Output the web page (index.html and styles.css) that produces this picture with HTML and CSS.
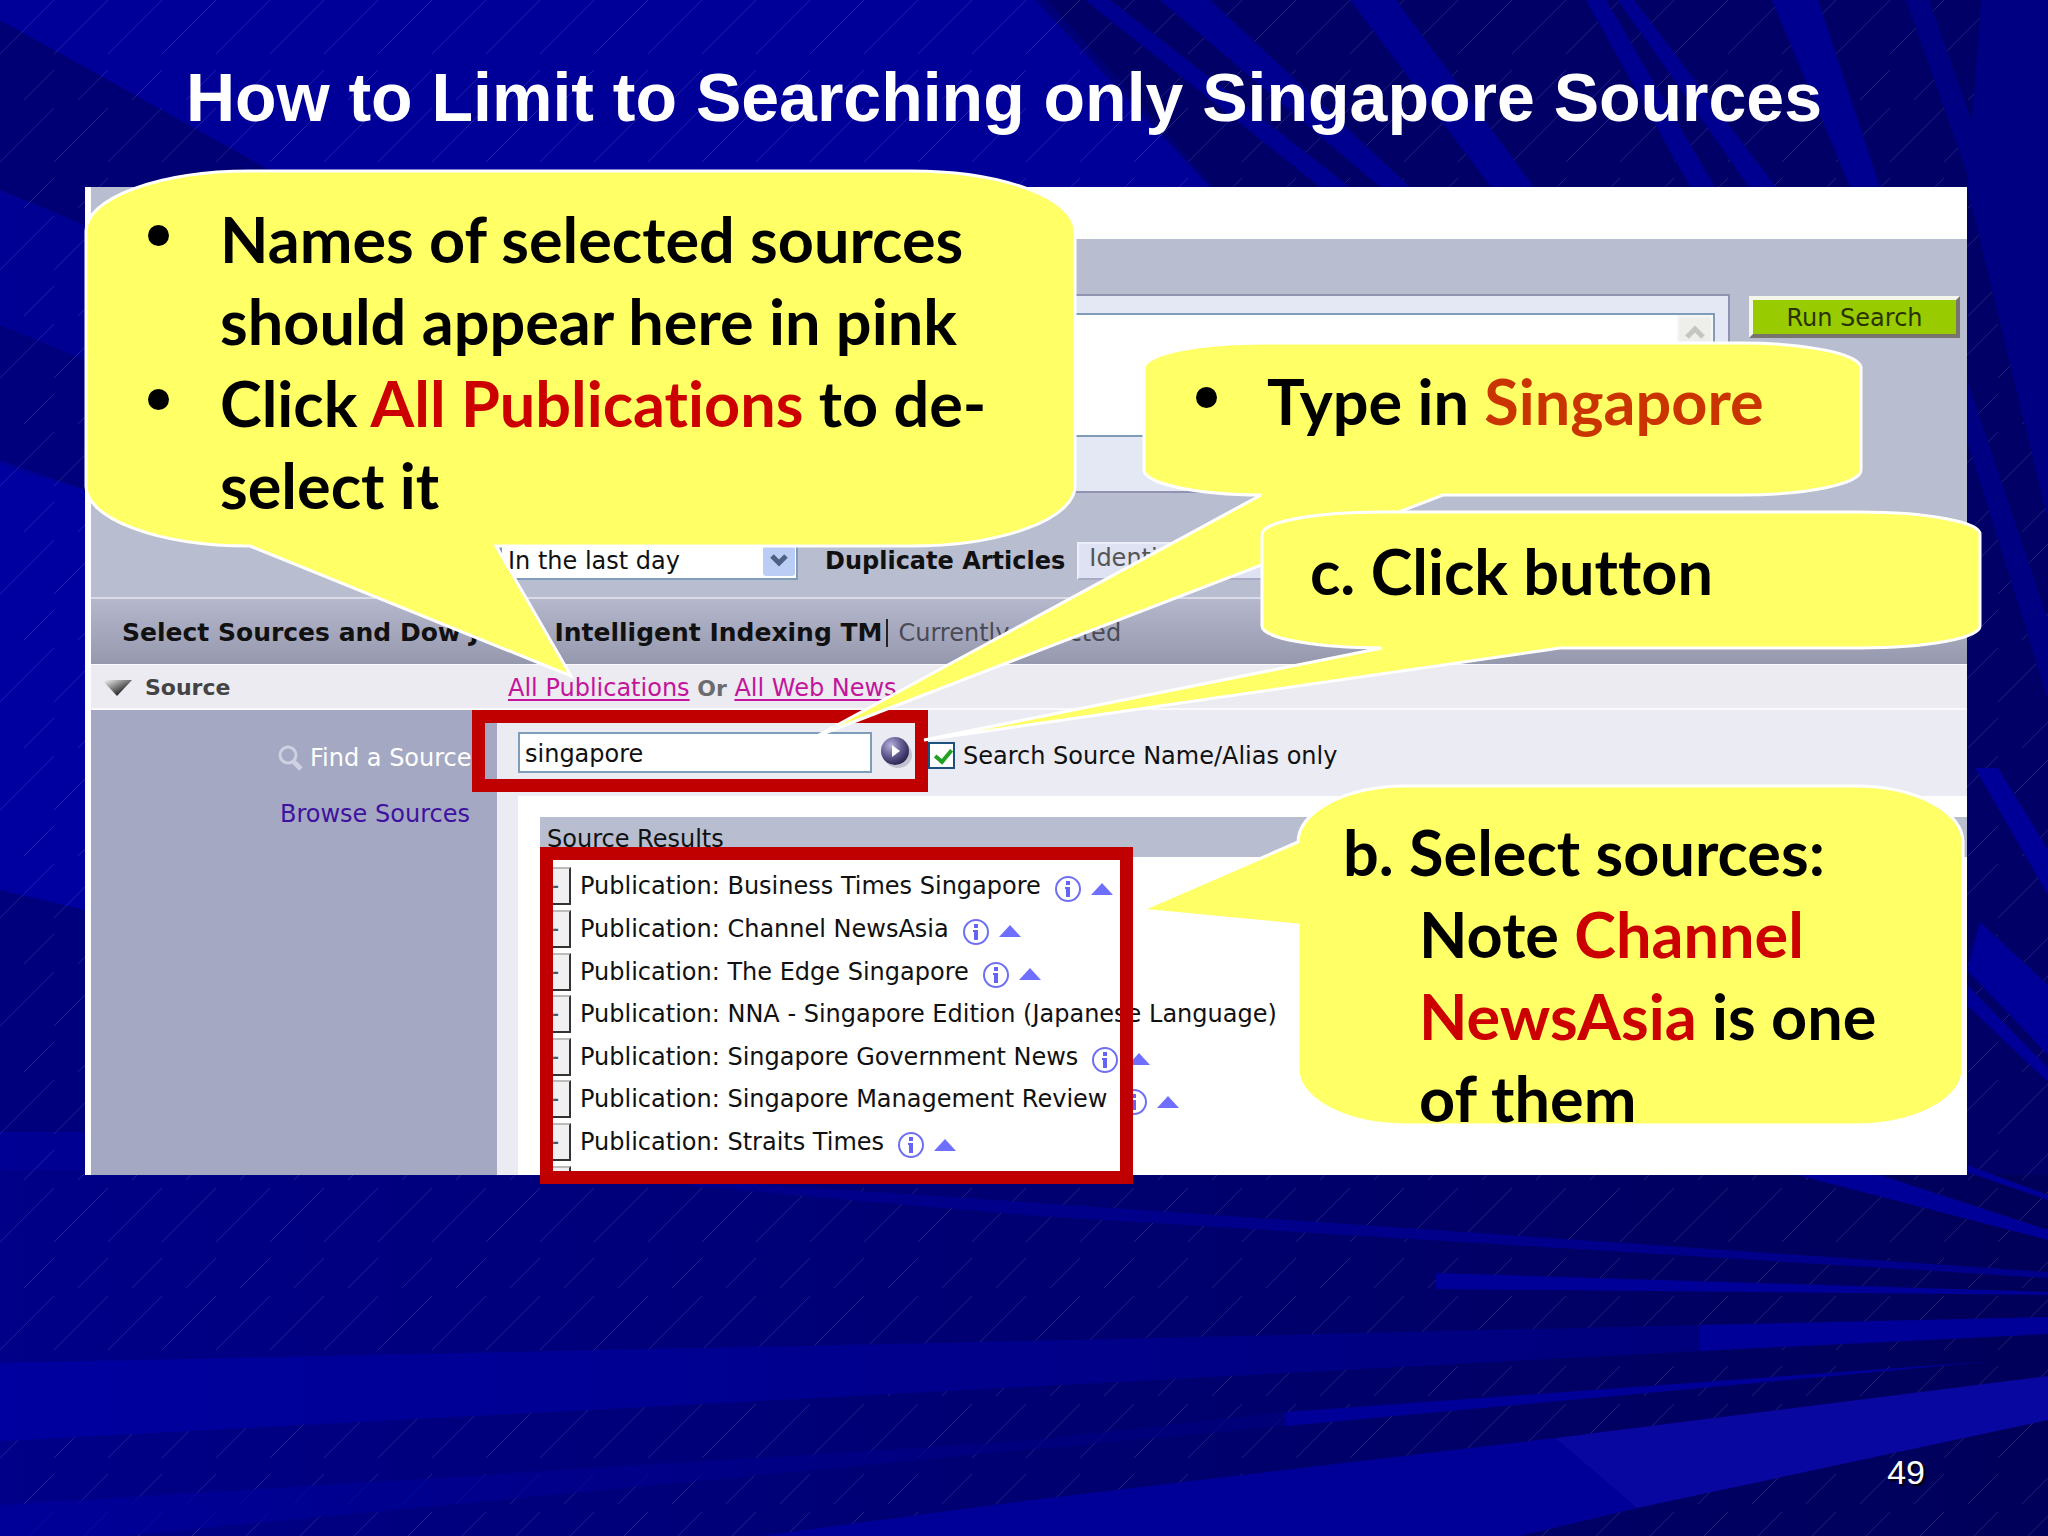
FILE: index.html
```html
<!DOCTYPE html>
<html lang="en">
<head>
<meta charset="utf-8">
<title>How to Limit to Searching only Singapore Sources</title>
<link rel="stylesheet" href="styles.css">
</head>
<body>
<main class="slide">
  <svg class="backdrop" viewBox="0 0 2048 1536" preserveAspectRatio="none" aria-hidden="true">
    <defs>
      <linearGradient id="base" x1="0" y1="0" x2="1" y2="0">
        <stop offset="0" stop-color="#000094"/><stop offset=".5" stop-color="#00007a"/><stop offset="1" stop-color="#00005c"/>
      </linearGradient>
      <linearGradient id="low" x1="0" y1="0" x2="1" y2="0">
        <stop offset="0" stop-color="#000088"/><stop offset=".5" stop-color="#000072"/><stop offset="1" stop-color="#00005a"/>
      </linearGradient>
      <linearGradient id="ray" x1="0" y1="0" x2="1" y2="0">
        <stop offset="0" stop-color="#0000a0"/><stop offset="1" stop-color="#00007c"/>
      </linearGradient>
      <pattern id="hatch" width="54" height="108" patternUnits="userSpaceOnUse">
        <path d="M54 0L0 54M54 70L24 100" stroke="#8c8cdc" stroke-opacity=".22" stroke-width="1"/>
      </pattern>
    </defs>
    <rect width="2048" height="1536" fill="url(#base)"/>
    <rect y="1170" width="2048" height="366" fill="url(#low)"/>
    <path fill="#000098" d="M0 0H1035L1210 187H300L0 20z"/>
    <path fill="#000074" d="M0 20L300 187H85V225L0 190z"/>
    <path fill="#00007c" d="M0 325L85 360V490L0 460z"/>
    <path fill="#0000a0" d="M0 465L85 490V910L0 890z"/>
    <path fill="#00007c" d="M0 890L85 910V1132H0z"/>
    <path fill="#000066" d="M1047 0H2048V1175H1967V187H1215z"/>
    <rect width="2048" height="1536" fill="url(#hatch)"/>
    <g fill="#000090">
      <path d="M1085 0H1110L1350 187H1320zM1160 0H1210L1410 187H1380zM1350 0H1396L1534 187H1491zM1586 0H1606L1715 187H1690zM1618 0H1634L1776 187H1749zM1772 0H1818L1880 187H1850z"/>
    </g>
    <path fill="#000082" d="M1906 0H1929L1995 187H1972zM1981 0H2048V520L1967 187z"/>
    <path fill="#000082" d="M1967 380L2048 620V700L1967 440z"/>
    <g fill="#000098">
      <path d="M1975 768H1998L2048 850V895zM1980 922L2048 985V1055L1967 970zM1967 985L2048 1068V1082L1967 1005zM1967 1165L2048 1195V1200L1967 1172z"/>
      <path d="M1797 1175H1880L2048 1230V1240z"/>
      <path d="M1436 1273L2048 1292V1295L1436 1289z"/>
      <path d="M1700 1325L2048 1317V1334L1700 1351z"/>
      <path d="M1286 1412L1995 1361L1286 1426z"/>
      <path d="M760 1536L1024 1501L1555 1438L1637 1508L1520 1536z"/>
    </g>
    <path fill="#0808a0" d="M1555 1438L2048 1376V1420L1637 1508z"/>
    <path fill="#00008a" d="M620 1175L1024 1202L2048 1272V1278L1024 1215L700 1187z"/>
    <path fill="url(#ray)" d="M0 1363L1024 1341L1700 1325V1351L1024 1387L0 1441z"/>
    <path fill="url(#ray)" opacity=".7" d="M0 1505L1024 1441L1286 1412V1426L1024 1450L120 1536H0z"/>
  </svg>

  <h1 class="title">How to Limit to Searching only Singapore Sources</h1>

  <section class="panel">
    <div class="tabs"><span class="tab-left"></span></div>

    <div class="query">
      <div class="query-frame">
        <div class="query-box">
          <textarea class="query-text" aria-label="Search terms"></textarea>
          <span class="scrollbar">
            <svg width="32" height="32" viewBox="0 0 32 32" aria-hidden="true"><rect width="32" height="32" rx="3" fill="#eeeeea"/><path d="M8 20L16 12L24 20" fill="none" stroke="#c6c6c0" stroke-width="5"/></svg>
          </span>
        </div>
      </div>
      <button class="run" type="button">Run Search</button>
    </div>

    <div class="filters">
      <span class="picker">
        <select class="date" aria-label="Date"><option>In the last day</option></select>
        <svg class="picker-arrow" viewBox="0 0 32 30" aria-hidden="true"><rect width="32" height="30" rx="3" fill="#bccdf5"/><path d="M9 10L16 17L23 10" fill="none" stroke="#4d6185" stroke-width="5"/></svg>
      </span>
      <label class="strong" for="dup">Duplicate Articles</label>
      <select class="dup" id="dup"><option>Identical</option></select>
    </div>

    <div class="indexing">
      <h2 class="indexing-title">Select Sources and Dow Jones Intelligent Indexing TM</h2>
      <span class="current">Currently Selected</span>
    </div>

    <div class="source-row">
      <div class="source-name">
        <svg width="30" height="16" viewBox="0 0 30 16" aria-hidden="true"><defs><linearGradient id="tri" x1="0" y1="0" x2="1" y2="1"><stop offset="0" stop-color="#fff"/><stop offset=".7" stop-color="#333"/></linearGradient></defs><path d="M0 0H30L15 16z" fill="url(#tri)"/></svg>
        <span>Source</span>
      </div>
      <p class="chosen"><a href="#">All Publications</a> <b>Or</b> <a href="#">All Web News</a></p>
    </div>

    <div class="body">
      <nav class="side">
        <a class="find" href="#"><svg width="26" height="26" viewBox="0 0 26 26" aria-hidden="true"><g fill="none" stroke="#cfd0e2"><circle cx="11" cy="10" r="8" stroke-width="3"/><path d="M16 16L24 24" stroke-width="5"/></g></svg>Find a Source</a>
        <a class="browse" href="#">Browse Sources</a>
      </nav>
      <div class="content">
        <form class="search">
          <input class="search-text" type="text" value="singapore" aria-label="Find a source">
          <button class="go" type="button" aria-label="Go">
            <svg width="32" height="34" viewBox="0 0 32 34" aria-hidden="true"><defs><radialGradient id="ball" cx=".35" cy=".3" r=".75"><stop offset="0" stop-color="#b6b2da"/><stop offset=".5" stop-color="#655f96"/><stop offset="1" stop-color="#25214c"/></radialGradient></defs><ellipse cx="18" cy="20" rx="14" ry="13" fill="#a9a9b8" opacity=".6"/><circle cx="15" cy="16" r="14" fill="url(#ball)"/><path d="M12 10L20 16L12 22z" fill="#fff"/></svg>
          </button>
          <label class="alias"><input class="tick" type="checkbox" checked>Search Source Name/Alias only</label>
        </form>
        <div class="results">
          <h3 class="results-title">Source Results</h3>
          <ul class="rows">
            <li><button type="button" class="minus">-</button>Publication: Business Times Singapore<svg class="info"><use href="#i"/></svg><svg class="up"><use href="#u"/></svg></li>
            <li><button type="button" class="minus">-</button>Publication: Channel NewsAsia<svg class="info"><use href="#i"/></svg><svg class="up"><use href="#u"/></svg></li>
            <li><button type="button" class="minus">-</button>Publication: The Edge Singapore<svg class="info"><use href="#i"/></svg><svg class="up"><use href="#u"/></svg></li>
            <li><button type="button" class="minus">-</button>Publication: NNA - Singapore Edition (Japanese Language)</li>
            <li><button type="button" class="minus">-</button>Publication: Singapore Government News<svg class="info"><use href="#i"/></svg><svg class="up"><use href="#u"/></svg></li>
            <li><button type="button" class="minus">-</button>Publication: Singapore Management Review<svg class="info"><use href="#i"/></svg><svg class="up"><use href="#u"/></svg></li>
            <li><button type="button" class="minus">-</button>Publication: Straits Times<svg class="info"><use href="#i"/></svg><svg class="up"><use href="#u"/></svg></li>
            <li><button type="button" class="minus" aria-label="Remove"></button><svg class="cut" viewBox="0 0 18 20" aria-hidden="true"><path d="M1 0H6V20H3V3H1zM9 0H11V20H9zM15 0H17V20H15z" fill="#1c1040"/></svg></li>
          </ul>
        </div>
      </div>
    </div>
  </section>

  <svg class="symbols" aria-hidden="true">
    <symbol id="i" viewBox="0 0 26 26"><circle cx="13" cy="13" r="12" fill="none" stroke="#6f6ff5" stroke-width="2"/><path d="M11 5H15V9H11zM10 11H15V21H11V13H10z" fill="#6464f5"/></symbol>
    <symbol id="u" viewBox="0 0 22 12"><path d="M11 0L22 12H0z" fill="#6f6fff"/></symbol>
  </svg>

  <div class="mark mark-search"></div>
  <div class="mark mark-results"></div>

  <aside class="callout names">
    <svg class="bubble" viewBox="86 170 989 376" aria-hidden="true"><path d="M250 171H910A164 60 0 0 1 1075 231V485A164 60 0 0 1 910 546H496L571 676L250 546A164 60 0 0 1 86 485V231A164 60 0 0 1 250 171z"/></svg>
    <ul class="points">
      <li>Names of selected sources should appear here in pink</li>
      <li>Click <em class="red">All Publications</em> to de-<br>select it</li>
    </ul>
  </aside>

  <aside class="callout type">
    <svg class="bubble" viewBox="1144 342 717 153" aria-hidden="true"><path d="M1265 343H1740A120 25 0 0 1 1861 367V470A120 25 0 0 1 1740 495H1443L817 736L1261 495A120 25 0 0 1 1144 470V367A120 25 0 0 1 1265 343z"/></svg>
    <ul class="points">
      <li>Type in <em class="orange">Singapore</em></li>
    </ul>
  </aside>

  <aside class="callout click">
    <svg class="bubble" viewBox="1262 512 718 136" aria-hidden="true"><path d="M1384 512H1860A120 22 0 0 1 1980 534V626A120 22 0 0 1 1860 648H1560L924 740L1382 648A120 22 0 0 1 1262 626V534A120 22 0 0 1 1384 512z"/></svg>
    <p>c. Click button</p>
  </aside>

  <aside class="callout pick">
    <svg class="bubble" viewBox="1297 785 666 340" aria-hidden="true"><path d="M1405 786H1855A108 56 0 0 1 1963 842V1069A108 56 0 0 1 1855 1125H1405A108 56 0 0 1 1298 1069V925L1141 910L1298 842A108 56 0 0 1 1405 786z"/></svg>
    <p>b. Select sources: Note <em class="red">Channel NewsAsia</em> is one of them</p>
  </aside>

  <footer class="page-number">49</footer>
</main>
</body>
</html>
```
FILE: styles.css
```css
* { box-sizing: border-box; }
body, h1, h2, h3, p, ul { margin: 0; padding: 0; }
ul { list-style: none; }
body { font-family: "DejaVu Sans", Verdana, sans-serif; font-size: 24px; color: #111; background: #000070; }
button, input, select, textarea { font: inherit; color: inherit; margin: 0; border-radius: 0; }

.slide { position: relative; display: flex; flex-direction: column; min-height: 100vh; overflow: hidden; }
.backdrop { position: absolute; inset: 0; width: 100%; height: 100%; }
.symbols { position: absolute; width: 0; height: 0; }

.title { position: relative; padding: 57px 80px 50px 186px; font: bold 68px/80px "Liberation Sans", Arial, sans-serif; color: #fff; }

.panel { position: relative; overflow: hidden; margin: 0 81px 0 85px; border-left: 6px solid #fdfdff; background: #b9bdd0; }

.tabs { display: flex; height: 52px; background: #fff; }
.tab-left { width: 400px; background: #b9bdd0; }

.query { display: flex; align-items: flex-start; gap: 19px; padding: 55px 7px 0 409px; }
.query-frame { flex: 1; padding: 17px 13px 54px; border: 2px solid #9193b0; background: #e4e8f5; }
.query-box { display: flex; height: 124px; border: 2px solid #7f9db9; background: #fff; }
.query-text { flex: 1; border: 0; resize: none; background: #fff; }
.scrollbar { width: 36px; padding: 2px; background: #f6f6f4; }
.scrollbar svg { display: block; }
.run { width: 211px; height: 42px; margin-top: 2px; padding: 2px 0 0; border: 4px solid; border-color: #f4f6ec #77756e #77756e #f4f6ec; background: #9c0; color: #2a3300; line-height: 32px; }

.filters { display: flex; align-items: center; padding: 49px 0 17px 409px; border-bottom: 2px solid #d9dbe8; }
.picker { position: relative; margin-right: 27px; }
.date, .dup { display: block; height: 38px; appearance: none; padding: 0 6px; }
.date { width: 298px; border: 2px solid #7f9db9; background: #fff; }
.picker-arrow { position: absolute; top: 4px; right: 3px; width: 32px; height: 30px; }
.strong { margin-right: 12px; font-weight: bold; }
.dup { width: 260px; padding: 0 10px 6px; border: 2px solid #eceefa; border-bottom-color: #a9abc4; background: #dfe2f2; color: #555; }

.indexing { display: flex; align-items: center; height: 65px; padding: 3px 0 0 31px; background: linear-gradient(#b5b8cd, #9698ae); }
.indexing-title { padding-right: 4px; font-size: 25px; line-height: 28px; border-right: 2px solid #222; }
.current { padding-left: 10px; color: #4a4a55; }

.source-row { display: flex; align-items: center; height: 46px; padding-top: 2px; border-top: 1px solid #fafafc; border-bottom: 2px solid #fafafc; background: #ebebf1; }
.source-name { display: flex; align-items: center; gap: 13px; width: 417px; padding-left: 11px; font-weight: bold; color: #444; font-size: 22px; }
.chosen a { color: #c4149c; text-underline-offset: 3px; }
.chosen b { font-size: 22px; color: #6c6c70; }

.body { display: grid; grid-template-columns: 406px 1fr; }
.side { display: flex; flex-direction: column; gap: 20px; padding: 30px 0 0 186px; background: #a4a8c2; line-height: 36px; white-space: nowrap; }
.side a { text-decoration: none; }
.find { display: flex; align-items: center; gap: 7px; color: #fff; }
.browse { padding-left: 3px; color: #3f12a0; }
.content { background: #ebebf3; }
.search { display: flex; align-items: center; height: 86px; padding: 0 0 2px 21px; }
.search-text { width: 354px; height: 41px; padding: 3px 5px 0; border: 2px solid #7f9db9; background: #fff; }
.go { display: flex; width: 32px; height: 34px; margin: 0 16px 0 8px; padding: 0; border: 0; background: none; }
.alias { display: flex; align-items: center; gap: 8px; padding-top: 7px; }
.tick { width: 27px; height: 27px; appearance: none; border: 2px solid #1c5180; background: #fff; }
.tick::after { content: ""; display: block; width: 7px; height: 13px; margin: 2px 0 0 8px; border: solid #21a121; border-width: 0 4px 4px 0; transform: rotate(40deg); }

.results { margin-left: 21px; padding: 21px 0 0 22px; background: #fff; }
.results-title { height: 40px; padding-left: 7px; font-size: 24px; font-weight: normal; line-height: 44px; background: #b8bdcf; }
.rows { display: grid; grid-template-rows: repeat(8, 1fr); height: 349px; margin-bottom: -31px; padding-top: 8px; }
.rows li { display: flex; align-items: center; white-space: nowrap; }
.minus { width: 31px; height: 38px; margin-right: 9px; padding: 0; border: 2px solid #333; border-top-color: #bbb; border-left-color: #ddd; background: #f0f0f2; color: #555; font-weight: bold; font-size: 16px; line-height: 32px; }
.info { width: 26px; height: 26px; margin: 6px 10px 0 14px; }
.up { width: 22px; height: 12px; margin-top: 5px; }
.cut { width: 18px; height: 20px; margin-left: 784px; }

.mark { position: absolute; border: 13px solid #c00000; }
.mark-search { left: 472px; top: 710px; width: 456px; height: 82px; }
.mark-results { left: 540px; top: 847px; width: 593px; height: 337px; }

.callout { position: absolute; font: bold 63px/82px Lato, Carlito, Calibri, sans-serif; font-variant-ligatures: none; color: #000; }
.bubble { position: absolute; inset: 0; width: 100%; height: 100%; overflow: visible; fill: #ff6; stroke: #fff; stroke-width: 3; }
.callout p, .points { position: relative; }
.callout em { font-style: normal; }
.red { color: #c00; }
.orange { color: #c93400; }
.points li { position: relative; }
.points li::before { content: ""; position: absolute; top: 27px; left: 0; width: 21px; height: 21px; border-radius: 50%; background: #000; }
.names { left: 86px; top: 170px; width: 989px; height: 376px; padding: 28px 40px 0 62px; }
.names li { padding-left: 72px; }
.type { left: 1144px; top: 342px; width: 717px; height: 153px; padding: 18px 0 0 52px; }
.type li { padding-left: 71px; }
.click { left: 1262px; top: 512px; width: 718px; height: 136px; padding: 18px 0 0 48px; }
.pick { left: 1297px; top: 785px; width: 666px; height: 340px; padding: 26px 50px 0 122px; }
.pick p { text-indent: -76px; }

.page-number { position: relative; margin-top: auto; padding: 0 123px 44px 0; text-align: right; font: 34px/40px "Liberation Sans", Arial, sans-serif; color: #fff; text-shadow: 2px 2px 2px #000; }
```
